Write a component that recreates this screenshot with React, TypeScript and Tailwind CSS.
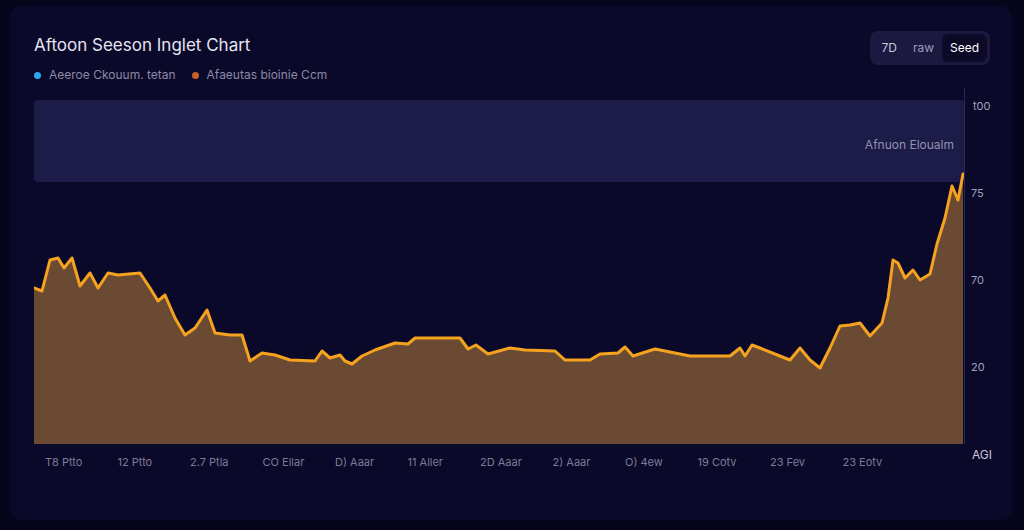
import React from "react";

const pts: [number, number][] = [[34,290],[42,293],[50,262],[58,260],[64,270],[72,260],[80,288],[90,275],[98,290],[108,275],[118,277],[140,275],[150,290],[158,303],[165,297],[175,320],[185,337],[195,330],[207,312],[215,335],[230,337],[242,337],[250,363],[262,355],[275,357],[290,362],[315,363],[322,353],[330,360],[340,357],[345,363],[352,366],[362,358],[375,352],[395,345],[408,346],[415,340],[460,340],[468,351],[476,347],[488,356],[510,350],[525,352],[555,353],[565,362],[590,362],[600,356],[618,355],[625,349],[633,358],[655,351],[670,354],[690,358],[730,358],[740,350],[745,358],[752,347],[760,350],[790,362],[800,350],[810,362],[820,370],[830,350],[840,328],[850,327],[860,325],[870,338],[882,325],[888,300],[893,262],[898,265],[905,280],[913,272],[920,282],[930,276],[937,246],[945,220],[952,188],[958,202],[963,176]];

const rel = pts.map(([x, y]) => [x - 34, y - 100] as [number, number]);
const line = rel.map(([x, y], i) => `${i ? "L" : "M"}${x} ${y}`).join(" ");
const area = `${line} L929 346 L0 346 Z`;

const xLabels = ["T8 Ptto","12 Ptto","2.7 Ptla","CO Ellar","D) Aaar","11 Aller","2D Aaar","2) Aaar","O) 4ew","19 Cotv","23 Fev","23 Eotv"];

export default function App() {
  const font = { fontFamily: "Inter, 'Liberation Sans', sans-serif" };
  return (
    <div className="w-[1024px] h-[530px] bg-[#06051c] pt-[6px] pl-[10px] pr-[12px] pb-[10px]" style={font}>
      <div className="h-full rounded-xl bg-[#0b0929] flex flex-col pl-[24px] pt-[25px] pr-[8px]">
        <div className="flex justify-between items-start">
          <div className="flex flex-col">
            <div className="text-[17px] text-[#e4e3f0] leading-[20px] mt-[4px]">Aftoon Seeson Inglet Chart</div>
            <div className="flex items-center gap-[8px] mt-[11px] text-[12px] text-[#8c8aa6]">
              <span className="w-[7px] h-[7px] rounded-full bg-[#2aa7f0]" />
              <span>Aeeroe Ckouum. tetan</span>
              <span className="w-[7px] h-[7px] rounded-full bg-[#c8602c] ml-[8px]" />
              <span>Afaeutas bioinie Ccm</span>
            </div>
          </div>
          <div className="flex items-center rounded-lg bg-[#1b1940] p-[3px] text-[12px] text-[#c9c8dc] mr-[14px]">
            <span className="px-[8px] py-[5px]">7D</span>
            <span className="px-[8px] py-[5px] text-[#9e9cb8]">raw</span>
            <span className="px-[8px] py-[5px] rounded-md bg-[#0c0a26] text-white">Seed</span>
          </div>
        </div>
        <div className="flex mt-[14px]">
          <div className="relative w-[930px] h-[346px]">
            <svg width="930" height="346" className="absolute inset-0">
              <rect x="0" y="2" width="930" height="82" rx="4" fill="#1d1b47" />
              <text x="920" y="51" textAnchor="end" fontSize="12" fill="#9391b2" fontFamily="Inter, sans-serif">Afnuon Eloualm</text>
              <path d={area} fill="#6b4a33" />
              <path d={line} fill="none" stroke="#f5a21f" strokeWidth="3" strokeLinejoin="round" strokeLinecap="round" />
            </svg>
          </div>
          <div className="relative border-l border-[#2a2850] -mt-[10px] h-[356px] w-[30px] text-[11px] text-[#a3a1bd]">
            <span className="absolute left-[8px] top-[10px]">t00</span>
            <span className="absolute left-[6px] top-[97px]">75</span>
            <span className="absolute left-[6px] top-[184px]">70</span>
            <span className="absolute left-[6px] top-[271px]">20</span>
          </div>
        </div>
        <div className="flex">
          <div className="w-[930px] flex pl-[11px] pt-[10px] text-[11px] text-[#7c7a98]">
            {xLabels.map((l) => (
              <span key={l} className="w-[72.5px] shrink-0">{l}</span>
            ))}
          </div>
          <span className="text-[12px] text-[#c9c8dc] pl-[8px] pt-[2px]">AGI</span>
        </div>
      </div>
    </div>
  );
}
